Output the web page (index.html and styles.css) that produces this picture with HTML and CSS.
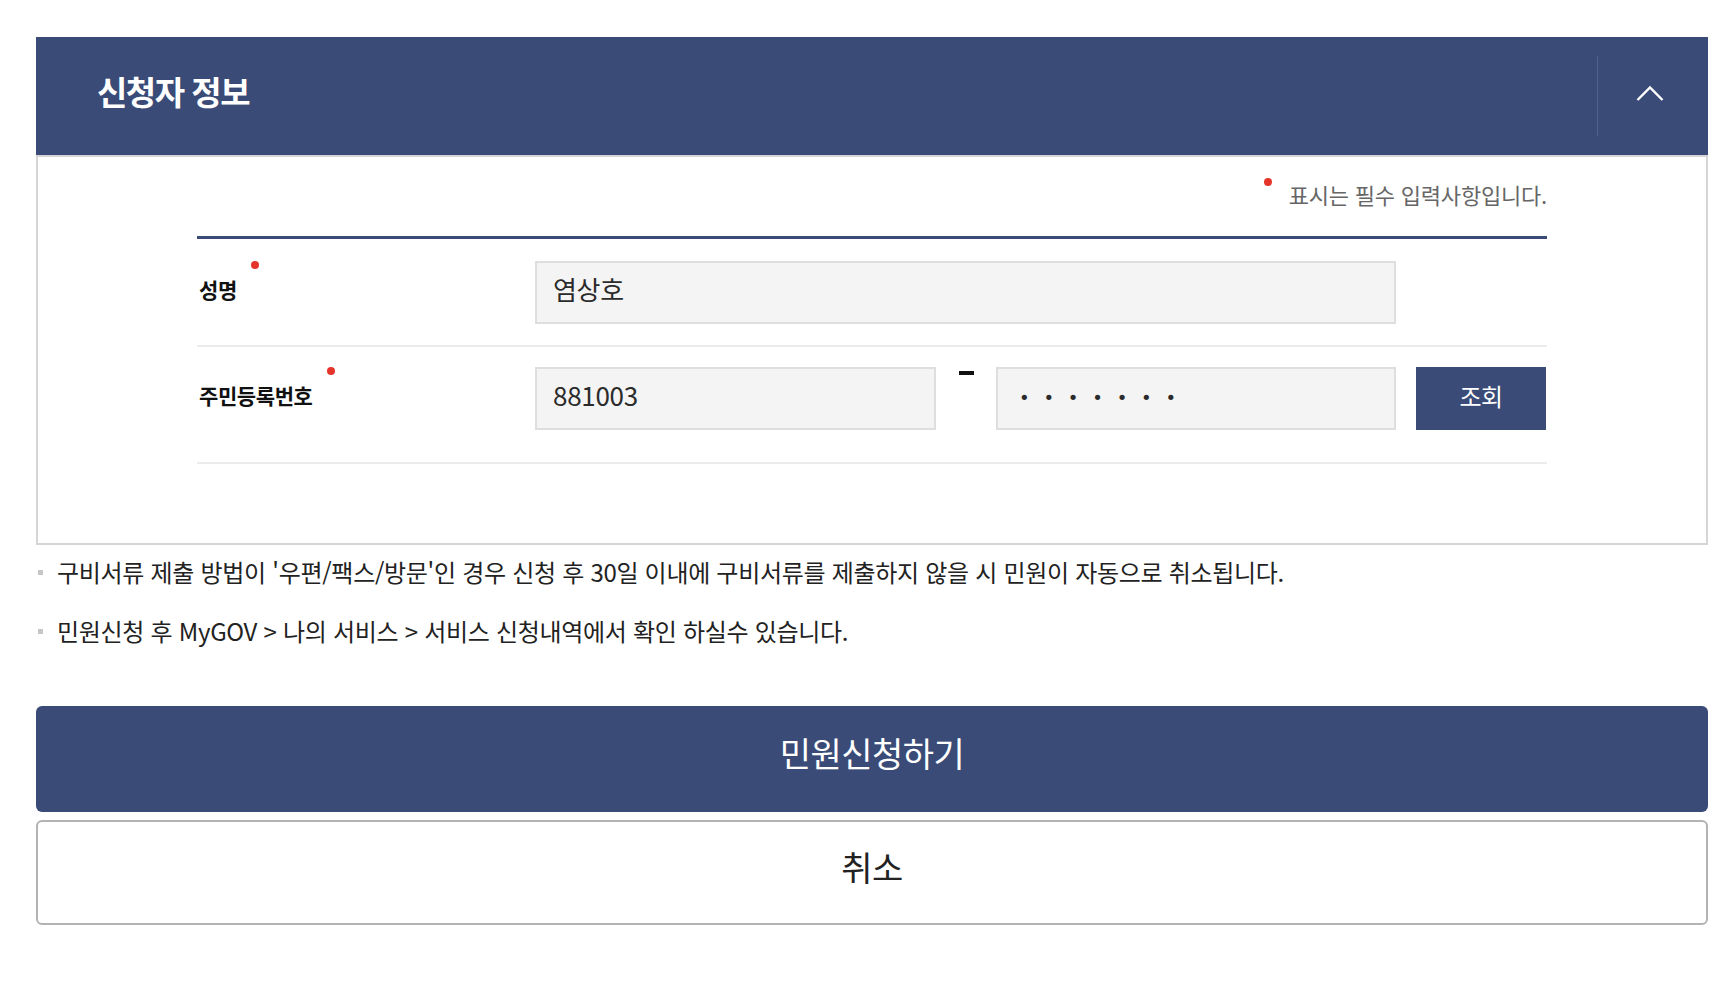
FILE: index.html
```html
<!DOCTYPE html>
<html lang="ko">
<head>
  <meta charset="UTF-8">
  <meta name="viewport" content="width=device-width, initial-scale=1.0">
  <title>신청자 정보</title>
  <link rel="stylesheet" href="styles.css">
</head>
<body>
<div class="apply">
  <section class="panel">
    <div class="panel-head">
      <h2 class="panel-title">신청자 정보</h2>
      <button class="panel-toggle" type="button" aria-label="접기">
        <svg width="28" height="18" viewBox="0 0 28 18">
          <polyline points="1.5,16 14,3.5 26.5,16" fill="none" stroke="#fff" stroke-width="2.4"/>
        </svg>
      </button>
    </div>

    <div class="panel-body">
      <p class="req-note"><span class="req-dot"></span>표시는 필수 입력사항입니다.</p>

      <div class="form-table">
        <div class="form-row">
          <div class="form-label"><label class="req" for="name">성명</label></div>
          <div class="form-field">
            <input class="field-input name-input" type="text" id="name" value="염상호">
          </div>
        </div>
        <div class="form-row jumin-row">
          <div class="form-label"><label class="req" for="jumin1">주민등록번호</label></div>
          <div class="form-field">
            <input class="field-input jumin-front" type="text" id="jumin1" value="881003">
            <span class="dash" aria-hidden="true"></span>
            <input class="field-input jumin-back" type="password" id="jumin2" value="1234567">
            <button class="btn-check" type="button">조회</button>
          </div>
        </div>
      </div>
    </div>
  </section>

  <ul class="notes">
    <li>구비서류 제출 방법이 '우편/팩스/방문'인 경우 신청 후 30일 이내에 구비서류를 제출하지 않을 시 민원이 자동으로 취소됩니다.</li>
    <li>민원신청 후 MyGOV &gt; 나의 서비스 &gt; 서비스 신청내역에서 확인 하실수 있습니다.</li>
  </ul>

  <div class="actions">
    <button class="btn-apply" type="button">민원신청하기</button>
    <button class="btn-cancel" type="button">취소</button>
  </div>
</div>
</body>
</html>
```

FILE: styles.css
```css
* {
  box-sizing: border-box;
}

body {
  margin: 0;
  background: #fff;
  font-family: "Noto Sans CJK KR", "Noto Sans", sans-serif;
  color: #222;
}

.apply {
  width: 1672px;
  margin-left: 36px;
  padding: 37px 0 60px;
}

/* header bar */
.panel-head {
  display: flex;
  align-items: center;
  height: 118px;
  background: #394b76;
}

.panel-title {
  flex: 1;
  margin: 0 0 10px;
  padding-left: 61px;
  color: #fff;
  font-size: 33px;
  font-weight: 700;
  letter-spacing: -1.5px;
  line-height: 1;
}

.panel-toggle {
  display: flex;
  align-items: center;
  justify-content: center;
  width: 111px;
  height: 80px;
  padding: 0 7px 6px 0;
  border: none;
  border-left: 1px solid #52628b;
  background: none;
  cursor: pointer;
}

.panel-body {
  border: 2px solid #d5d5d5;
  padding: 23px 0 79px;
}

.req-note {
  display: flex;
  justify-content: flex-end;
  align-items: flex-start;
  width: 1350px;
  margin: 0 auto 28px;
  font-size: 22px;
  line-height: 28px;
  letter-spacing: -0.2px;
  color: #666;
}

.req-dot {
  width: 8px;
  height: 8px;
  margin: -2px 17px 0 0;
  border-radius: 50%;
  background: #e5352b;
}

/* form */
.form-table {
  width: 1350px;
  margin: 0 auto;
  border-top: 3px solid #394b76;
}

.form-row {
  display: flex;
  align-items: center;
  padding: 22px 0 21px;
  border-bottom: 2px solid #ebebeb;
}

.form-row.jumin-row {
  padding: 20px 0 32px;
}

.form-label {
  width: 338px;
  padding-left: 2px;
  margin-bottom: 6px;
}

.req {
  position: relative;
  display: inline-block;
  font-size: 21px;
  font-weight: 700;
  line-height: 24px;
  letter-spacing: -0.4px;
  color: #111;
}

.req::after {
  content: "";
  position: absolute;
  right: -22px;
  top: -16px;
  width: 8px;
  height: 8px;
  border-radius: 50%;
  background: #e5352b;
}

.form-field {
  display: flex;
  align-items: center;
}

.field-input {
  height: 63px;
  padding: 0 16px 8px;
  border: 2px solid #dedede;
  background: #f4f4f4;
  font-family: "Noto Sans CJK KR", "Noto Sans", sans-serif;
  font-size: 26px;
  letter-spacing: -0.3px;
  color: #2b2b2b;
  outline: none;
}

.name-input {
  width: 861px;
}

.jumin-front {
  width: 401px;
}

.jumin-back {
  width: 400px;
  padding: 0 0 2px 21px;
  font-family: "DejaVu Sans", sans-serif;
  font-size: 18px;
  letter-spacing: 13.8px;
}

.dash {
  align-self: flex-start;
  width: 15px;
  height: 4px;
  margin: 4px 22px 0 23px;
  background: #111;
}

.btn-check {
  width: 130px;
  height: 63px;
  margin-left: 20px;
  padding-bottom: 8px;
  border: none;
  background: #394b76;
  color: #fff;
  font-family: inherit;
  font-size: 24px;
  letter-spacing: -0.5px;
  cursor: pointer;
}

/* notes */
.notes {
  list-style: none;
  margin: 12px 0 0;
  padding: 0;
}

.notes li {
  display: flex;
  align-items: center;
  margin-bottom: 29px;
  font-size: 24px;
  line-height: 30px;
  letter-spacing: -0.3px;
  color: #222;
}

.notes li:last-child {
  margin-bottom: 0;
}

.notes li::before {
  content: "";
  flex: none;
  width: 5px;
  height: 5px;
  margin: 0 14px 0 2px;
  background: #c6c6c6;
}

/* buttons */
.actions {
  display: flex;
  flex-direction: column;
  gap: 8px;
  margin-top: 60px;
}

.btn-apply,
.btn-cancel {
  border-radius: 6px;
  font-family: inherit;
  font-size: 34px;
  letter-spacing: -0.5px;
  cursor: pointer;
}

.btn-apply {
  height: 106px;
  padding-bottom: 14px;
  border: none;
  background: #394b76;
  color: #fff;
}

.btn-cancel {
  height: 105px;
  padding-bottom: 14px;
  border: 2px solid #b3b3b3;
  background: #fff;
  color: #222;
}
```
